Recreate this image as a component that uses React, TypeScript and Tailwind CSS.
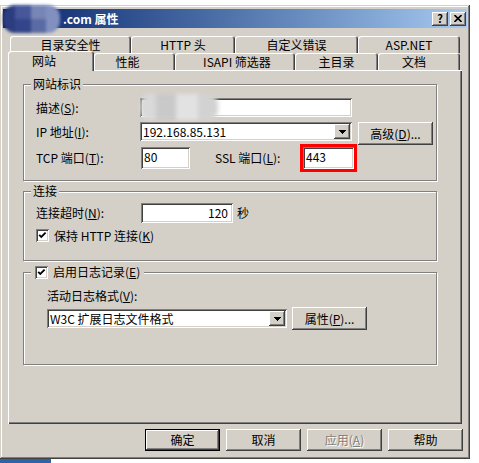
import React from 'react';

// classic win32 bevels
const raised = 'shadow-[inset_-1px_-1px_#404040,inset_1px_1px_#ffffff,inset_-2px_-2px_#808080,inset_2px_2px_#d4d0c8]';
const sunken = 'shadow-[inset_1px_1px_#808080,inset_-1px_-1px_#ffffff,inset_2px_2px_#404040,inset_-2px_-2px_#d4d0c8]';
const etched = 'border border-[#808080] shadow-[1px_1px_0_#ffffff,inset_1px_1px_0_#ffffff]';
const tabEdge = 'rounded-t-[3px] shadow-[inset_1px_1px_#ffffff,inset_-1px_0_#404040,inset_-2px_0_#808080]';

function U({ k }: { k: string }) {
  return <span className="underline underline-offset-[1px]">{k}</span>;
}

interface BtnProps {
  children: React.ReactNode;
  className?: string;
  disabled?: boolean;
  isDefault?: boolean;
}

function Btn({ children, className = '', disabled, isDefault }: BtnProps) {
  const edge = isDefault
    ? 'border border-black shadow-[inset_-1px_-1px_#404040,inset_1px_1px_#ffffff,inset_-2px_-2px_#808080]'
    : raised;
  return (
    <div
      className={`flex w-[75px] shrink-0 items-center justify-center bg-[#d4d0c8] ${edge} ${
        disabled ? 'text-[#808080] [text-shadow:1px_1px_0_#ffffff]' : 'text-black'
      } ${className}`}
    >
      {children}
    </div>
  );
}

function DropArrow() {
  return (
    <div className={`flex w-[16px] shrink-0 items-center justify-center bg-[#d4d0c8] ${raised}`}>
      <svg width="7" height="4" viewBox="0 0 7 4" shapeRendering="crispEdges">
        <rect x="0" y="0" width="7" height="1" fill="#000" />
        <rect x="1" y="1" width="5" height="1" fill="#000" />
        <rect x="2" y="2" width="3" height="1" fill="#000" />
        <rect x="3" y="3" width="1" height="1" fill="#000" />
      </svg>
    </div>
  );
}

function Combo({ text, className = '' }: { text: string; className?: string }) {
  return (
    <div className={`flex h-[19px] shrink-0 bg-white p-[2px] ${sunken} ${className}`}>
      <span className="flex-1 truncate pl-[1px] leading-[15px]">{text}</span>
      <DropArrow />
    </div>
  );
}

function CheckBox() {
  return (
    <div className={`relative h-[13px] w-[13px] shrink-0 bg-white ${sunken}`}>
      <svg className="absolute left-0 top-0" width="13" height="13" viewBox="0 0 13 13">
        <path d="M3.2 5.8 L5.3 8 L9.6 3.6" fill="none" stroke="#000" strokeWidth="1.8" />
      </svg>
    </div>
  );
}

function Group({
  title,
  className = '',
  children,
}: {
  title: React.ReactNode;
  className?: string;
  children: React.ReactNode;
}) {
  return (
    <div className={`relative ml-[15px] w-[414px] ${etched} ${className}`}>
      <div className="absolute -top-[8px] left-[7px] flex items-center bg-[#d4d0c8] px-[2px] leading-[14px]">
        {title}
      </div>
      {children}
    </div>
  );
}

const row1 = [
  { label: '目录安全性', w: 'w-[121px]' },
  { label: 'HTTP 头', w: 'w-[104px]' },
  { label: '自定义错误', w: 'w-[123px]' },
  { label: 'ASP.NET', w: 'w-[102px]' },
];

const row2 = [
  { label: '性能', w: 'w-[81px] pr-[14px]' },
  { label: 'ISAPI 筛选器', w: 'w-[120px] pl-[4px]' },
  { label: '主目录', w: 'w-[83px]' },
  { label: '文档', w: 'w-[82px] pr-[10px]' },
];

export default function App() {
  return (
    <div className="h-[463px] w-[479px] overflow-hidden bg-white font-['Noto_Sans_CJK_SC',sans-serif] text-[12px] text-black">
      <div className="mt-[5px] h-[454px] w-[470px] bg-[#d4d0c8] px-[3px] pt-[4px] shadow-[inset_-1px_-1px_#404040,inset_1px_1px_#d4d0c8,inset_-2px_-2px_#808080,inset_2px_2px_#ffffff]">
        {/* title bar */}
        <div className="flex h-[19px] items-center bg-linear-to-r from-[#0a246a] to-[#a6caf0] pr-[1px]">
          <div className="-my-[6px] flex h-[28px] w-[57px] shrink-0 overflow-hidden rounded-[12px] blur-[1.5px]">
            <div className="w-[12px] bg-[#2b3d7e]" />
            <div className="flex w-[16px] flex-col">
              <div className="h-1/2 bg-[#46579a]" />
              <div className="h-1/2 bg-[#33458a]" />
            </div>
            <div className="flex w-[15px] flex-col">
              <div className="h-1/2 bg-[#7886b6]" />
              <div className="h-1/2 bg-[#5a6aa4]" />
            </div>
            <div className="w-[14px] bg-[#8290c0]" />
          </div>
          <span className="ml-[3px] font-bold leading-[14px] text-white">.com 属性</span>
          <div className="ml-auto flex gap-[2px]">
            <div className={`flex h-[14px] w-[16px] items-center justify-center bg-[#d4d0c8] text-[11px] font-bold leading-none ${raised}`}>
              ?
            </div>
            <div className={`flex h-[14px] w-[16px] items-center justify-center bg-[#d4d0c8] ${raised}`}>
              <svg width="8" height="7" viewBox="0 0 8 7">
                <path d="M0.5 0 L7.5 7 M7.5 0 L0.5 7" stroke="#000" strokeWidth="1.6" />
              </svg>
            </div>
          </div>
        </div>

        {/* tabs */}
        <div className="mt-[8px]">
          <div className="ml-[7px] flex h-[17px]">
            {row1.map((t) => (
              <div key={t.label} className={`flex h-[17px] items-center justify-center ${t.w} ${tabEdge}`}>
                {t.label}
              </div>
            ))}
          </div>
          <div className="ml-[5px] flex h-[17px] items-start">
            <div className={`relative z-10 -mt-[2px] flex h-[20px] w-[86px] items-center justify-center bg-[#d4d0c8] pb-[1px] pr-[14px] ${tabEdge}`}>
              网站
            </div>
            {row2.map((t) => (
              <div key={t.label} className={`flex h-[17px] items-center justify-center ${t.w} ${tabEdge}`}>
                {t.label}
              </div>
            ))}
          </div>

          {/* tab panel */}
          <div className="ml-[5px] h-[354px] w-[454px] pt-[14px] shadow-[inset_1px_1px_#ffffff,inset_-1px_-1px_#404040,inset_-2px_-2px_#808080]">
            <Group title="网站标识" className="h-[97px] pl-[12px] pt-[13px]">
              <div className="flex h-[19px] items-center">
                <span className="w-[104px]">
                  描述(<U k="S" />):
                </span>
                <div className={`relative h-[19px] w-[212px] bg-white ${sunken}`}>
                  <div className="absolute -top-[4px] left-0 flex h-[26px] w-[78px] overflow-hidden rounded-[10px] blur-[2px]">
                    <div className="w-[16px] bg-[#d9d9d9]" />
                    <div className="w-[20px] bg-[#c9c9c9]" />
                    <div className="w-[22px] bg-[#e2e2e2]" />
                    <div className="w-[20px] bg-[#d2d2d2]" />
                  </div>
                </div>
              </div>
              <div className="mt-[5px] flex h-[19px] items-center">
                <span className="w-[104px]">
                  IP 地址(<U k="I" />):
                </span>
                <Combo text="192.168.85.131" className="w-[212px]" />
                <Btn className="ml-[6px] h-[23px] self-start">
                  高级(<U k="D" />)...
                </Btn>
              </div>
              <div className="mt-[6px] flex h-[22px] items-center">
                <span className="w-[105px]">
                  TCP 端口(<U k="T" />):
                </span>
                <div className={`h-[22px] w-[49px] bg-white pl-[3px] pt-[2px] leading-[15px] ${sunken}`}>80</div>
                <span className="ml-[25px] w-[85px]">
                  SSL 端口(<U k="L" />):
                </span>
                <div className="border-[3px] border-[#ff0000]">
                  <div className={`h-[22px] w-[51px] bg-white pl-[3px] pt-[2px] leading-[15px] ${sunken}`}>443</div>
                </div>
              </div>
            </Group>

            <Group title="连接" className="mt-[10px] h-[70px] pl-[12px] pt-[11px]">
              <div className="flex h-[20px] items-center">
                <span className="w-[105px]">
                  连接超时(<U k="N" />):
                </span>
                <div className={`h-[20px] w-[92px] bg-white pr-[5px] pt-[2px] text-right leading-[16px] ${sunken}`}>120</div>
                <span className="ml-[4px]">秒</span>
              </div>
              <div className="mt-[6px] flex h-[13px] items-center">
                <CheckBox />
                <span className="ml-[5px] leading-[14px]">
                  保持 HTTP 连接(<U k="K" />)
                </span>
              </div>
            </Group>

            <Group
              title={
                <span className="-ml-[1px] flex items-center gap-[5px] pl-[3px] pr-[2px]">
                  <CheckBox />
                  <span>
                    启用日志记录(<U k="E" />)
                  </span>
                </span>
              }
              className="mt-[11px] h-[93px] pl-[23px] pt-[16px]"
            >
              <div className="h-[14px] leading-[14px]">
                活动日志格式(<U k="V" />):
              </div>
              <div className="mt-[4px] flex items-center">
                <Combo text="W3C 扩展日志文件格式" className="w-[240px]" />
                <Btn className="ml-[5px] h-[23px]">
                  属性(<U k="P" />)...
                </Btn>
              </div>
            </Group>
          </div>

          {/* dialog buttons */}
          <div className="mt-[5px] flex h-[22px] justify-end gap-[6px] pr-[4px]">
            <Btn isDefault>确定</Btn>
            <Btn>取消</Btn>
            <Btn disabled>
              应用(<U k="A" />)
            </Btn>
            <Btn>帮助</Btn>
          </div>
        </div>
      </div>
      <div className="h-[4px] w-[51px] bg-[#2f63a8]" />
    </div>
  );
}
